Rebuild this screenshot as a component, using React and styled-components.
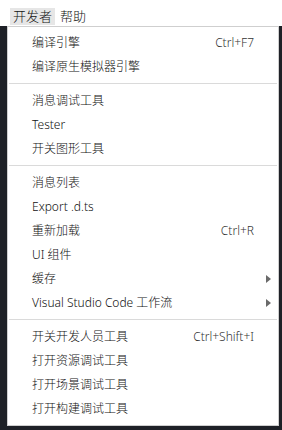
import React from "react";
import styled, { createGlobalStyle } from "styled-components";

const Global = createGlobalStyle`
  html, body { margin: 0; padding: 0; background: #1e2127; }
  * { box-sizing: border-box; }
`;

const Screen = styled.div`
  width: 282px;
  height: 430px;
  background: #1e2127;
  display: flex;
  flex-direction: column;
  overflow: hidden;
  font-family: "Noto Sans", "Noto Sans CJK SC", sans-serif;
  font-weight: 300;
  color: #111111;
`;

const MenuBar = styled.div`
  height: 26px;
  background: #ffffff;
  display: flex;
  align-items: flex-start;
  padding: 8px 0 0 10px;
  gap: 2px;
`;

const BarItem = styled.div`
  height: 17px;
  padding: 0 3px;
  font-size: 13px;
  line-height: 17px;
  background: ${(p) => (p.$active ? "#e6e6e6" : "transparent")};
`;

const Body = styled.div`
  flex: 1;
  display: flex;
  padding: 0 3px 4px 7px;
`;

const Panel = styled.div`
  flex: 1;
  height: 400px;
  background: #ffffff;
  border: 1px solid #cfcfcf;
  padding: 4px 0;
  display: flex;
  flex-direction: column;
`;

const Item = styled.div`
  height: 24px;
  display: grid;
  grid-template-columns: 1fr auto 23px;
  align-items: center;
  padding-left: 24px;
  font-size: 12px;
  line-height: 24px;
  white-space: nowrap;
`;

const Shortcut = styled.span`
  color: #333333;
  margin-right: 1px;
`;

const Arrow = styled.span`
  justify-self: start;
  margin-left: 11px;
  width: 0;
  height: 0;
  border-top: 4px solid transparent;
  border-bottom: 4px solid transparent;
  border-left: 5px solid #6a6a6a;
`;

const Separator = styled.div`
  height: 1px;
  margin: 4px 1px 5px;
  background: #dadada;
`;

const groups = [
  [
    { label: "编译引擎", shortcut: "Ctrl+F7" },
    { label: "编译原生模拟器引擎" },
  ],
  [
    { label: "消息调试工具" },
    { label: "Tester" },
    { label: "开关图形工具" },
  ],
  [
    { label: "消息列表" },
    { label: "Export .d.ts" },
    { label: "重新加载", shortcut: "Ctrl+R" },
    { label: "UI 组件" },
    { label: "缓存", sub: true },
    { label: "Visual Studio Code 工作流", sub: true },
  ],
  [
    { label: "开关开发人员工具", shortcut: "Ctrl+Shift+I" },
    { label: "打开资源调试工具" },
    { label: "打开场景调试工具" },
    { label: "打开构建调试工具" },
  ],
];

export default function App() {
  return (
    <>
      <Global />
      <Screen>
        <MenuBar>
          <BarItem $active>开发者</BarItem>
          <BarItem>帮助</BarItem>
        </MenuBar>
        <Body>
          <Panel>
            {groups.map((g, gi) => (
              <React.Fragment key={gi}>
                {gi > 0 && <Separator />}
                {g.map((it) => (
                  <Item key={it.label}>
                    <span>{it.label}</span>
                    <Shortcut>{it.shortcut || ""}</Shortcut>
                    {it.sub ? <Arrow /> : <span />}
                  </Item>
                ))}
              </React.Fragment>
            ))}
          </Panel>
        </Body>
      </Screen>
    </>
  );
}
